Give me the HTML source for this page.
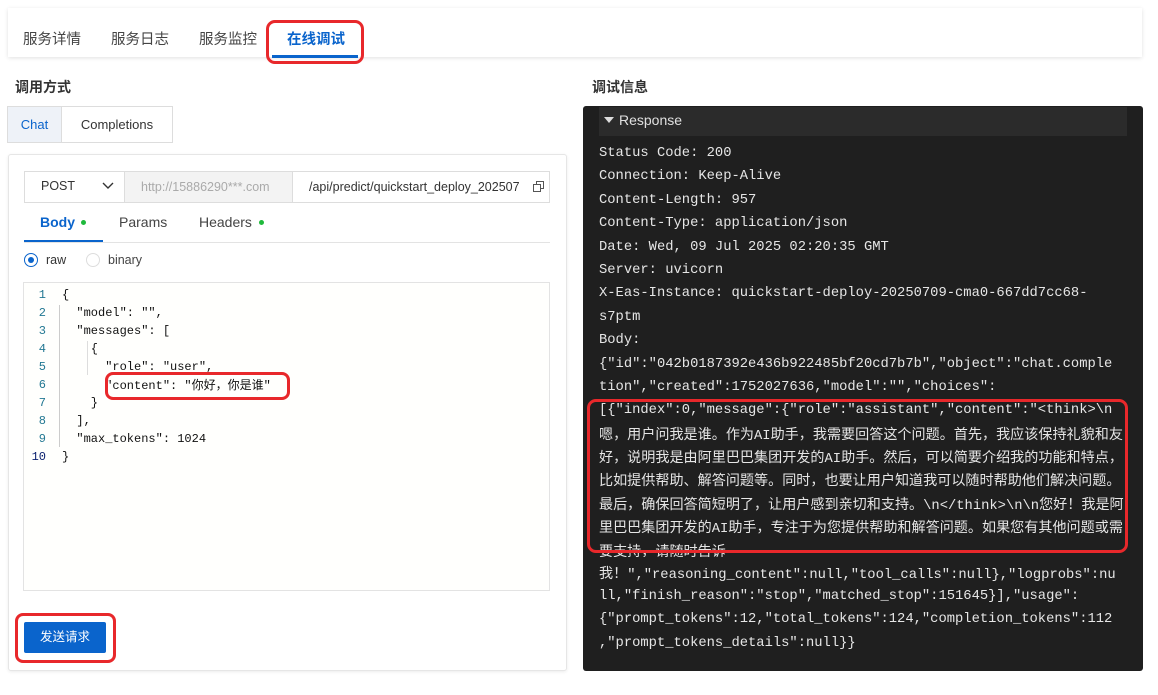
<!DOCTYPE html>
<html><head><meta charset="utf-8"><style>
*{box-sizing:border-box;margin:0;padding:0}
body{width:1158px;height:695px;background:#fff;position:relative;overflow:hidden;font-family:"Liberation Sans","Noto Sans CJK SC",sans-serif;color:#333}
.a{position:absolute}
.mono{font-family:"Liberation Mono","Noto Sans CJK SC",monospace}
.tab{position:absolute;top:28px;font-size:14.5px;color:#444}
.code div{height:18px;line-height:18px;white-space:nowrap}
.resp div{height:23.4px;line-height:23.4px;white-space:nowrap}
.c{font-size:14.1px;font-family:"Noto Sans CJK SC",sans-serif}
</style></head><body>
<div class="a" style="left:8px;top:8px;width:1134px;height:49px;background:#fff;box-shadow:0 1px 4px rgba(0,0,0,.12)"></div>
<div class="tab" style="left:23px">服务详情</div>
<div class="tab" style="left:111px">服务日志</div>
<div class="tab" style="left:199px">服务监控</div>
<div class="tab" style="left:287px;color:#0a64cc;font-weight:bold">在线调试</div>
<div class="a" style="left:272px;top:55px;width:86px;height:3px;background:#0a64cc"></div>
<div class="a" style="left:266px;top:20px;width:98px;height:44px;border:3px solid #e8282b;border-radius:9px"></div>

<div class="a" style="left:15px;top:77px;font-size:14px;font-weight:bold;color:#333">调用方式</div>
<div class="a" style="left:592px;top:77px;font-size:14px;font-weight:bold;color:#333">调试信息</div>

<div class="a" style="left:7px;top:106px;width:166px;height:37px;border:1px solid #ddd;background:#fff"></div>
<div class="a" style="left:8px;top:107px;width:54px;height:35px;background:#eef2f8;border-right:1px solid #ddd;color:#0a64cc;font-size:13px;line-height:35px;text-align:center">Chat</div>
<div class="a" style="left:62px;top:107px;width:110px;height:35px;font-size:13px;line-height:35px;text-align:center;color:#333">Completions</div>

<div class="a" style="left:8px;top:154px;width:559px;height:517px;border:1px solid #e6e6e6;border-radius:3px;box-shadow:0 1px 3px rgba(0,0,0,.08);background:#fff"></div>
<div class="a" style="left:24px;top:171px;width:526px;height:32px;border:1px solid #ddd;background:#fff"></div>
<div class="a" style="left:41px;top:179px;font-size:12.5px;color:#333">POST</div>
<svg class="a" style="left:101px;top:181px" width="14" height="10"><path d="M2 2 L7 7 L12 2" stroke="#333" stroke-width="1.4" fill="none"/></svg>
<div class="a" style="left:124px;top:172px;width:169px;height:30px;background:#f3f3f3;border-left:1px solid #ddd;border-right:1px solid #ddd;color:#aaa;font-size:12.5px;line-height:30px;padding-left:16px">http://15886290***.com</div>
<div class="a" style="left:309px;top:172px;width:210px;height:30px;overflow:hidden;white-space:nowrap;font-size:12.5px;line-height:30px;color:#333">/api/predict/quickstart_deploy_20250709</div>
<svg class="a" style="left:533px;top:181px" width="11" height="11"><rect x="0.5" y="3.5" width="7" height="7" fill="none" stroke="#555"/><path d="M3.5 3.5V0.5H10.5V7.5H7.5" fill="none" stroke="#555"/></svg>

<div class="a" style="left:40px;top:214px;font-size:14px;color:#0a64cc;font-weight:bold">Body</div>
<div class="a" style="left:81px;top:220px;width:5px;height:5px;border-radius:50%;background:#1fb93b"></div>
<div class="a" style="left:119px;top:214px;font-size:14px;color:#444">Params</div>
<div class="a" style="left:199px;top:214px;font-size:14px;color:#444">Headers</div>
<div class="a" style="left:259px;top:220px;width:5px;height:5px;border-radius:50%;background:#1fb93b"></div>
<div class="a" style="left:24px;top:242px;width:526px;height:1px;background:#e3e3e3"></div>
<div class="a" style="left:24px;top:240px;width:79px;height:2px;background:#0a64cc"></div>

<div class="a" style="left:24px;top:253px;width:14px;height:14px;border:1px solid #0a64cc;border-radius:50%"></div>
<div class="a" style="left:28px;top:257px;width:6px;height:6px;background:#0a64cc;border-radius:50%"></div>
<div class="a" style="left:46px;top:253px;font-size:12.5px;color:#333">raw</div>
<div class="a" style="left:86px;top:253px;width:14px;height:14px;border:1px solid #ddd;border-radius:50%"></div>
<div class="a" style="left:108px;top:253px;font-size:12.5px;color:#444">binary</div>

<div class="a" style="left:23px;top:282px;width:527px;height:309px;border:1px solid #e3e3e3;background:#fffffd"></div>
<div class="a" style="left:59px;top:305px;width:1px;height:142px;background:#ccc"></div>
<div class="a" style="left:87px;top:341px;width:1px;height:34px;background:#ddd"></div>
<div class="a mono code" style="left:30px;top:286px;font-size:12px;color:#237893;text-align:right;width:16px">
<div>1</div><div>2</div><div>3</div><div>4</div><div>5</div><div>6</div><div>7</div><div>8</div><div>9</div><div style="color:#0b216f">10</div></div>
<div class="a mono code" style="left:62px;top:286px;font-size:12px;color:#111">
<div>{</div><div>&nbsp;&nbsp;"model": "",</div><div>&nbsp;&nbsp;"messages": [</div><div>&nbsp;&nbsp;&nbsp;&nbsp;{</div><div>&nbsp;&nbsp;&nbsp;&nbsp;&nbsp;&nbsp;"role": "user",</div><div>&nbsp;&nbsp;&nbsp;&nbsp;&nbsp;&nbsp;"content": "<span style="font-size:12px;font-family:'Noto Sans CJK SC',sans-serif">你好，你是谁</span>"</div><div>&nbsp;&nbsp;&nbsp;&nbsp;}</div><div>&nbsp;&nbsp;],</div><div>&nbsp;&nbsp;"max_tokens": 1024</div><div>}</div></div>
<div class="a" style="left:105px;top:372px;width:185px;height:28px;border:3px solid #e8282b;border-radius:8px"></div>

<div class="a" style="left:24px;top:622px;width:82px;height:31px;background:#0a64cc;color:#fff;font-size:12.5px;line-height:31px;text-align:center;border-radius:2px">发送请求</div>
<div class="a" style="left:15px;top:613px;width:101px;height:50px;border:3px solid #e8282b;border-radius:8px"></div>

<div class="a" style="left:583px;top:106px;width:560px;height:565px;background:#1f1f1f;border-radius:3px"></div>
<div class="a" style="left:599px;top:107px;width:528px;height:29px;background:#2b2b2b"></div>
<svg class="a" style="left:604px;top:117px" width="10" height="7"><path d="M0 0H10L5 6Z" fill="#ddd"/></svg>
<div class="a" style="left:619px;top:112px;font-size:14px;color:#e0e0e0">Response</div>
<div class="a mono resp" style="left:599px;top:142px;font-size:13.8px;color:#e6e6e6">
<div>Status Code: 200</div>
<div>Connection: Keep-Alive</div>
<div>Content-Length: 957</div>
<div>Content-Type: application/json</div>
<div>Date: Wed, 09 Jul 2025 02:20:35 GMT</div>
<div>Server: uvicorn</div>
<div>X-Eas-Instance: quickstart-deploy-20250709-cma0-667dd7cc68-</div>
<div>s7ptm</div>
<div>Body:</div>
<div>{"id":"042b0187392e436b922485bf20cd7b7b","object":"chat.comple</div>
<div>tion","created":1752027636,"model":"","choices":</div>
<div>[{"index":0,"message":{"role":"assistant","content":"&lt;think&gt;\n</div>
<div><span class="c">嗯，用户问我是谁。作为</span>AI<span class="c">助手，我需要回答这个问题。首先，我应该保持礼貌和友</span></div>
<div><span class="c">好，说明我是由阿里巴巴集团开发的</span>AI<span class="c">助手。然后，可以简要介绍我的功能和特点，</span></div>
<div><span class="c">比如提供帮助、解答问题等。同时，也要让用户知道我可以随时帮助他们解决问题。</span></div>
<div><span class="c">最后，确保回答简短明了，让用户感到亲切和支持。</span>\n&lt;/think&gt;\n\n<span class="c">您好！我是阿</span></div>
<div><span class="c">里巴巴集团开发的</span>AI<span class="c">助手，专注于为您提供帮助和解答问题。如果您有其他问题或需</span></div>
<div style="height:17px;overflow:hidden"><span class="c">要支持，请随时告诉</span></div>
<div style="margin-top:5px"><span class="c">我！</span>","reasoning_content":null,"tool_calls":null},"logprobs":nu</div>
<div>ll,"finish_reason":"stop","matched_stop":151645}],"usage":</div>
<div>{"prompt_tokens":12,"total_tokens":124,"completion_tokens":112</div>
<div>,"prompt_tokens_details":null}}</div>
</div>
<div class="a" style="left:587px;top:399px;width:541px;height:154px;border:3px solid #e8282b;border-radius:9px"></div>
</body></html>
